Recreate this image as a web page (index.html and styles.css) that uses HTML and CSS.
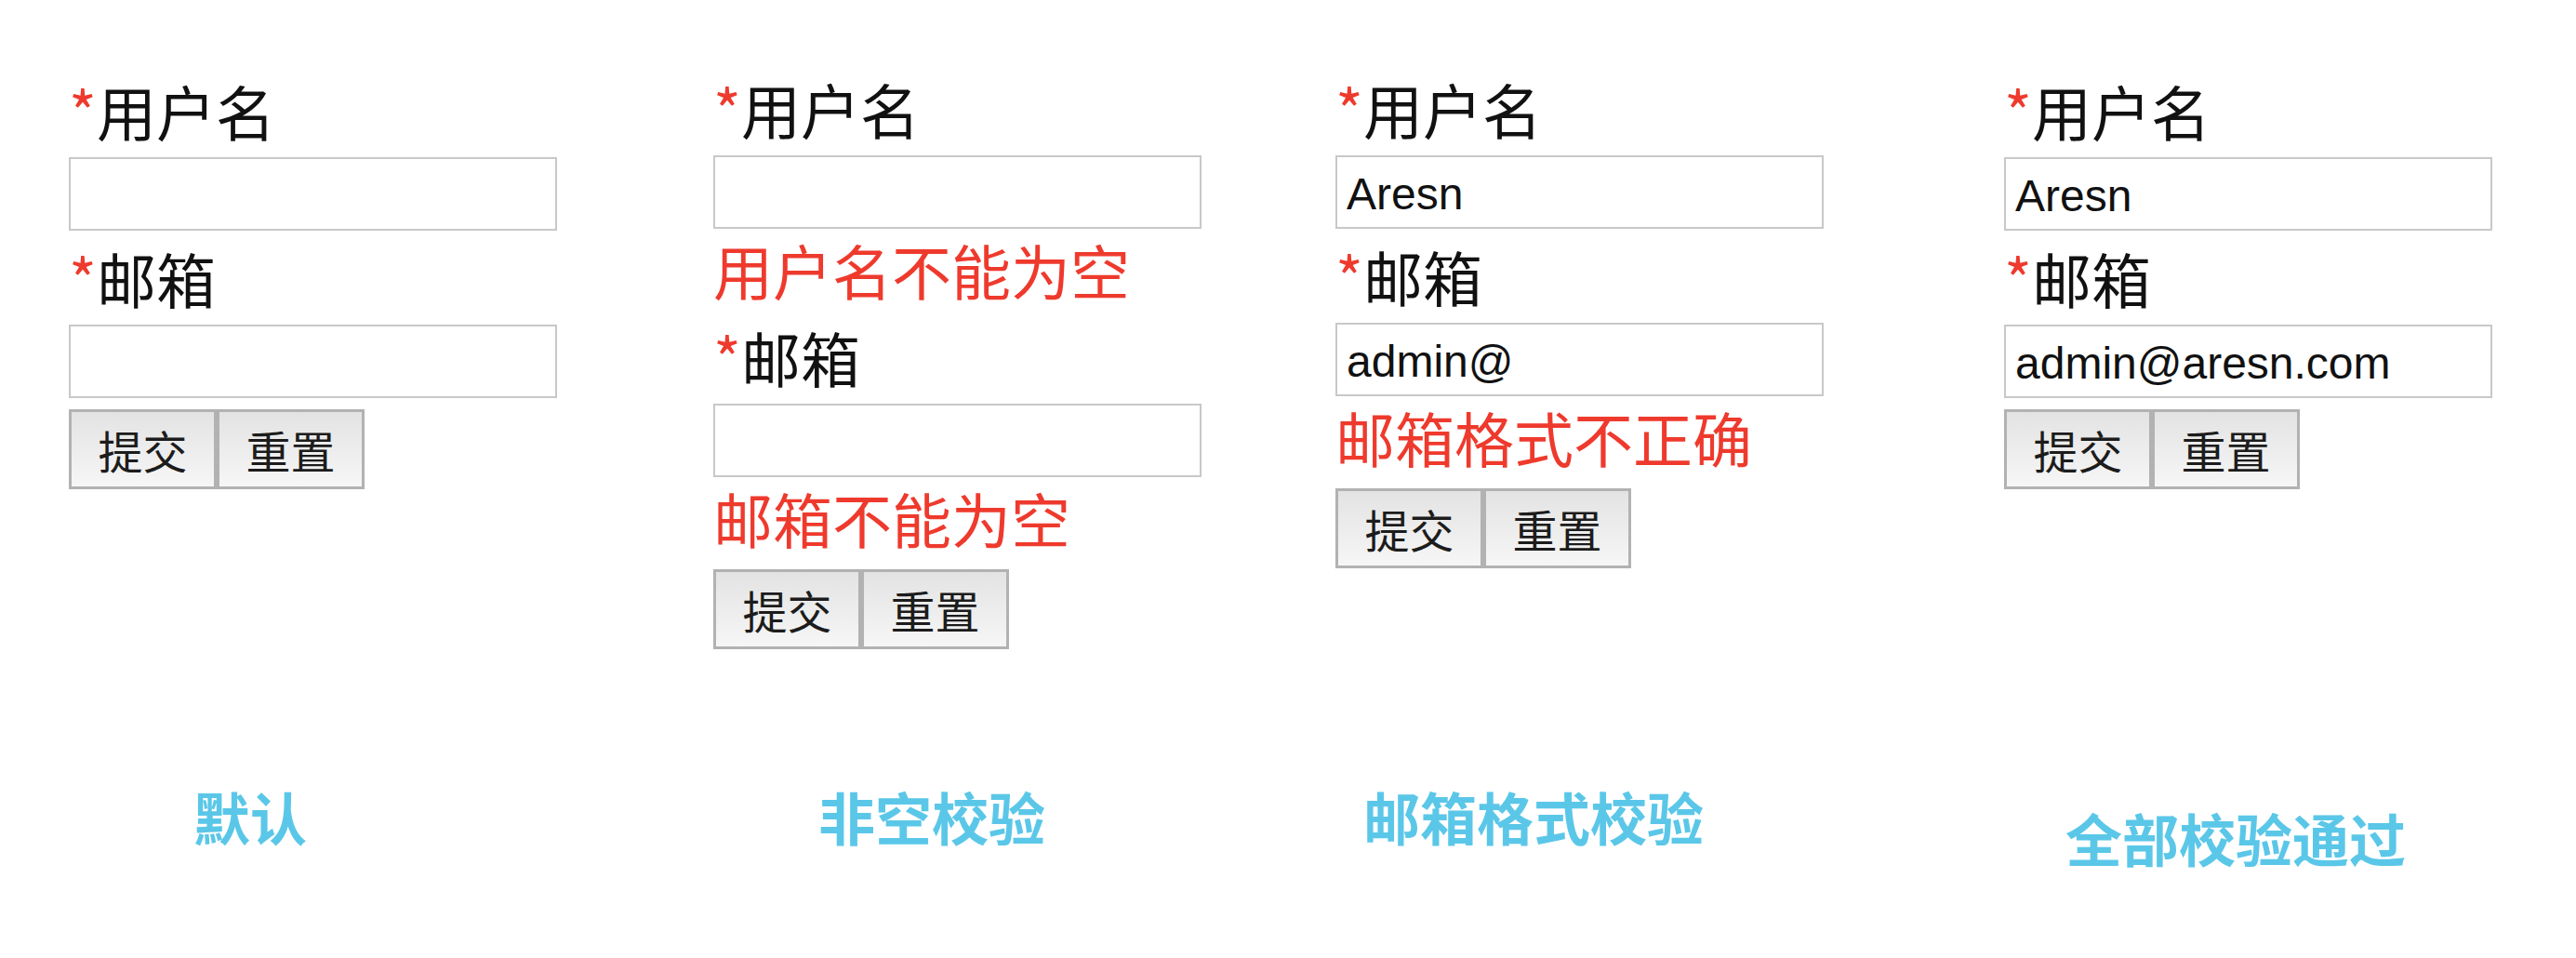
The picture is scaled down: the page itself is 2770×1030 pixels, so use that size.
FILE: index.html
```html
<!DOCTYPE html>
<html lang="zh-CN">
<head>
<meta charset="utf-8">
<title>表单校验</title>
<link rel="stylesheet" href="styles.css">
</head>
<body>
<div class="board">
  <section class="panel p1">
    <form class="form">
      <div class="label"><span class="req">*</span>用户名</div>
      <input class="field" type="text" value="">
      <div class="label"><span class="req">*</span>邮箱</div>
      <input class="field" type="text" value="">
      <div class="actions">
        <button type="button" class="btn">提交</button>
        <button type="button" class="btn">重置</button>
      </div>
    </form>
    <div class="caption c1">默认</div>
  </section>

  <section class="panel p2">
    <form class="form">
      <div class="label"><span class="req">*</span>用户名</div>
      <input class="field" type="text" value="">
      <div class="error">用户名不能为空</div>
      <div class="label"><span class="req">*</span>邮箱</div>
      <input class="field" type="text" value="">
      <div class="error">邮箱不能为空</div>
      <div class="actions">
        <button type="button" class="btn">提交</button>
        <button type="button" class="btn">重置</button>
      </div>
    </form>
    <div class="caption c2">非空校验</div>
  </section>

  <section class="panel p3">
    <form class="form">
      <div class="label"><span class="req">*</span>用户名</div>
      <input class="field" type="text" value="Aresn">
      <div class="label"><span class="req">*</span>邮箱</div>
      <input class="field" type="text" value="admin@">
      <div class="error">邮箱格式不正确</div>
      <div class="actions">
        <button type="button" class="btn">提交</button>
        <button type="button" class="btn">重置</button>
      </div>
    </form>
    <div class="caption c3">邮箱格式校验</div>
  </section>

  <section class="panel p4">
    <form class="form">
      <div class="label"><span class="req">*</span>用户名</div>
      <input class="field" type="text" value="Aresn">
      <div class="label"><span class="req">*</span>邮箱</div>
      <input class="field" type="text" value="admin@aresn.com">
      <div class="actions">
        <button type="button" class="btn">提交</button>
        <button type="button" class="btn">重置</button>
      </div>
    </form>
    <div class="caption c4">全部校验通过</div>
  </section>
</div>
</body>
</html>
```

FILE: styles.css
```css
html, body {
  margin: 0;
  padding: 0;
  background: #ffffff;
}

body {
  font-family: "Noto Sans CJK SC", "Noto Sans", sans-serif;
  color: #111111;
}

.board {
  display: flex;
  padding: 0 0 0 74px;
}

.panel {
  display: flex;
  flex-direction: column;
  flex: none;
}

.p1 { width: 693px; padding-top: 68px; }
.p2 { width: 669px; padding-top: 66px; }
.p3 { width: 719px; padding-top: 66px; }
.p4 { width: 600px; padding-top: 68px; }

.form {
  display: flex;
  flex-direction: column;
  align-items: flex-start;
  height: 760px;
  margin: 0;
}

.p2 .form, .p3 .form { height: 762px; }

.label {
  font-size: 64px;
  line-height: 101px;
  height: 101px;
  color: #111111;
  white-space: nowrap;
}

.req {
  color: #ee3a2d;
}

.error {
  font-size: 64px;
  line-height: 87px;
  height: 87px;
  color: #ee3a2d;
  white-space: nowrap;
}

.field {
  box-sizing: border-box;
  width: 525px;
  height: 79px;
  margin: 0;
  padding: 3px 10px 0;
  border: 2px solid #c8c8c8;
  border-radius: 0;
  background: #ffffff;
  font-family: "Liberation Sans", "Noto Sans", sans-serif;
  font-size: 48px;
  color: #111111;
  outline: none;
}

.actions {
  display: flex;
  gap: 0;
  margin-top: 12px;
}

.btn {
  box-sizing: border-box;
  width: 159px;
  height: 86px;
  margin: 0;
  padding: 0;
  border: 3px solid #b2b2b2;
  border-radius: 0;
  background: linear-gradient(#e3e3e3, #f6f6f6);
  font-family: "Noto Sans CJK SC", "Noto Sans", sans-serif;
  font-size: 48px;
  line-height: 1;
  color: #1c1c1c;
}

.caption {
  font-size: 61px;
  font-weight: 700;
  line-height: 100px;
  color: #5bc7e8;
  white-space: nowrap;
}

.c1 { padding-left: 134px; }
.c2 { padding-left: 113px; }
.c3 { padding-left: 30px; }
.c4 { padding-left: 66px; margin-top: 23px; }
```
